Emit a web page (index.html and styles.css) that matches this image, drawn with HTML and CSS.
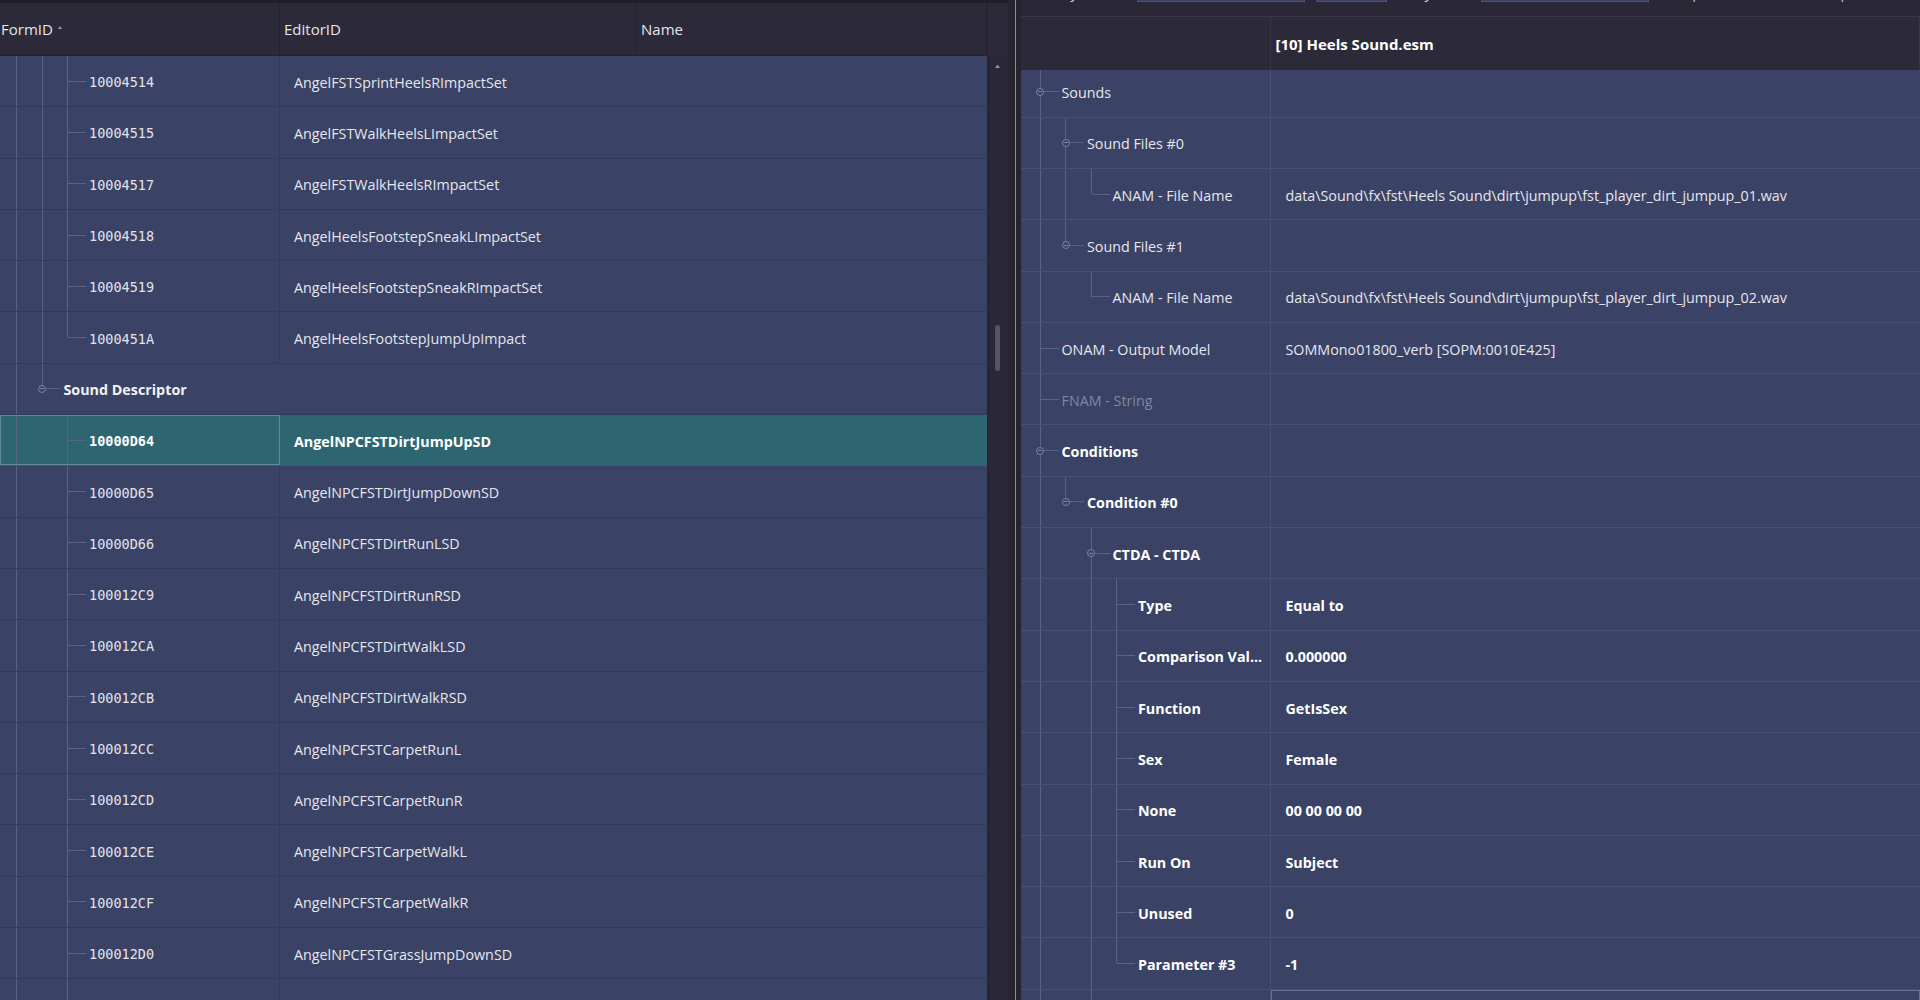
FILE: index.html
```html
<!DOCTYPE html>
<html lang="en">
<head>
    <meta charset="UTF-8">
    <meta name="viewport" content="width=device-width, initial-scale=1.0">
    <title>Record Browser</title>
    <link rel="stylesheet" href="styles.css">
</head>
<body>
    <div class="app">
        <!-- Record list (left) -->
        <section class="records">
            <div class="topstrip"></div>
            <div class="records-body">
                <div class="list">
                    <div class="list-head">
                        <div class="hc hc-first">FormID <span class="sort"></span></div>
                        <div class="hc">EditorID</div>
                        <div class="hc">Name</div>
                    </div>
                    <div class="rows">
                        <div class="row"><div class="c-id"><span class="g pipe"></span><span class="g pipe"></span><span class="g own tee"></span><span class="fid">10004514</span></div><div class="c-ed">AngelFSTSprintHeelsRImpactSet</div><div></div></div>
                        <div class="row"><div class="c-id"><span class="g pipe"></span><span class="g pipe"></span><span class="g own tee"></span><span class="fid">10004515</span></div><div class="c-ed">AngelFSTWalkHeelsLImpactSet</div><div></div></div>
                        <div class="row"><div class="c-id"><span class="g pipe"></span><span class="g pipe"></span><span class="g own tee"></span><span class="fid">10004517</span></div><div class="c-ed">AngelFSTWalkHeelsRImpactSet</div><div></div></div>
                        <div class="row"><div class="c-id"><span class="g pipe"></span><span class="g pipe"></span><span class="g own tee"></span><span class="fid">10004518</span></div><div class="c-ed">AngelHeelsFootstepSneakLImpactSet</div><div></div></div>
                        <div class="row"><div class="c-id"><span class="g pipe"></span><span class="g pipe"></span><span class="g own tee"></span><span class="fid">10004519</span></div><div class="c-ed">AngelHeelsFootstepSneakRImpactSet</div><div></div></div>
                        <div class="row"><div class="c-id"><span class="g pipe"></span><span class="g pipe"></span><span class="g own corner"></span><span class="fid">1000451A</span></div><div class="c-ed">AngelHeelsFootstepJumpUpImpact</div><div></div></div>
                        <div class="row group"><div class="c-id"><span class="g pipe"></span><span class="g own tog above"><span class="knob"></span></span><span class="grp">Sound Descriptor</span></div></div>
                        <div class="row selected"><div class="c-id"><span class="g pipe"></span><span class="g"></span><span class="g own tee"></span><span class="fid">10000D64</span></div><div class="c-ed">AngelNPCFSTDirtJumpUpSD</div><div></div></div>
                        <div class="row"><div class="c-id"><span class="g pipe"></span><span class="g"></span><span class="g own tee"></span><span class="fid">10000D65</span></div><div class="c-ed">AngelNPCFSTDirtJumpDownSD</div><div></div></div>
                        <div class="row"><div class="c-id"><span class="g pipe"></span><span class="g"></span><span class="g own tee"></span><span class="fid">10000D66</span></div><div class="c-ed">AngelNPCFSTDirtRunLSD</div><div></div></div>
                        <div class="row"><div class="c-id"><span class="g pipe"></span><span class="g"></span><span class="g own tee"></span><span class="fid">100012C9</span></div><div class="c-ed">AngelNPCFSTDirtRunRSD</div><div></div></div>
                        <div class="row"><div class="c-id"><span class="g pipe"></span><span class="g"></span><span class="g own tee"></span><span class="fid">100012CA</span></div><div class="c-ed">AngelNPCFSTDirtWalkLSD</div><div></div></div>
                        <div class="row"><div class="c-id"><span class="g pipe"></span><span class="g"></span><span class="g own tee"></span><span class="fid">100012CB</span></div><div class="c-ed">AngelNPCFSTDirtWalkRSD</div><div></div></div>
                        <div class="row"><div class="c-id"><span class="g pipe"></span><span class="g"></span><span class="g own tee"></span><span class="fid">100012CC</span></div><div class="c-ed">AngelNPCFSTCarpetRunL</div><div></div></div>
                        <div class="row"><div class="c-id"><span class="g pipe"></span><span class="g"></span><span class="g own tee"></span><span class="fid">100012CD</span></div><div class="c-ed">AngelNPCFSTCarpetRunR</div><div></div></div>
                        <div class="row"><div class="c-id"><span class="g pipe"></span><span class="g"></span><span class="g own tee"></span><span class="fid">100012CE</span></div><div class="c-ed">AngelNPCFSTCarpetWalkL</div><div></div></div>
                        <div class="row"><div class="c-id"><span class="g pipe"></span><span class="g"></span><span class="g own tee"></span><span class="fid">100012CF</span></div><div class="c-ed">AngelNPCFSTCarpetWalkR</div><div></div></div>
                        <div class="row"><div class="c-id"><span class="g pipe"></span><span class="g"></span><span class="g own tee"></span><span class="fid">100012D0</span></div><div class="c-ed">AngelNPCFSTGrassJumpDownSD</div><div></div></div>
                        <div class="row"><div class="c-id"><span class="g pipe"></span><span class="g"></span><span class="g own tee"></span><span class="fid">100012D1</span></div><div class="c-ed">AngelNPCFSTGrassJumpUpSD</div><div></div></div>
                    </div>
                </div>
                <div class="vscroll">
                    <div class="vs-head"></div>
                    <div class="vs-arrow"></div>
                    <div class="vs-thumb"></div>
                </div>
            </div>
        </section>

        <div class="splitter"></div>

        <!-- Record view (right) -->
        <section class="view">
            <div class="toolbar">
                <span class="tb-label">Filter by</span>
                <span class="tb-input wide"></span>
                <span class="tb-input short"></span>
                <span class="tb-label">Key by</span>
                <span class="tb-input wide"></span>
                <span class="tb-label tb-gap">|</span>
                <span class="tb-label tb-end">Sorting |</span>
            </div>
            <div class="rec">
                <div class="rec-head">
                    <div class="rh"></div>
                    <div class="rh rh-file">[10] Heels Sound.esm</div>
                </div>
                <div class="fields">
                    <div class="fld"><div class="f-name"><span class="g own tog above below"><span class="knob"></span></span><span>Sounds</span></div><div class="f-val"></div></div>
                    <div class="fld"><div class="f-name"><span class="g pipe"></span><span class="g own tog above below"><span class="knob"></span></span><span>Sound Files #0</span></div><div class="f-val"></div></div>
                    <div class="fld"><div class="f-name"><span class="g pipe"></span><span class="g pipe"></span><span class="g own corner"></span><span>ANAM - File Name</span></div><div class="f-val">data\Sound\fx\fst\Heels Sound\dirt\jumpup\fst_player_dirt_jumpup_01.wav</div></div>
                    <div class="fld"><div class="f-name"><span class="g pipe"></span><span class="g own tog above"><span class="knob"></span></span><span>Sound Files #1</span></div><div class="f-val"></div></div>
                    <div class="fld"><div class="f-name"><span class="g pipe"></span><span class="g"></span><span class="g own corner"></span><span>ANAM - File Name</span></div><div class="f-val">data\Sound\fx\fst\Heels Sound\dirt\jumpup\fst_player_dirt_jumpup_02.wav</div></div>
                    <div class="fld"><div class="f-name"><span class="g own tee"></span><span>ONAM - Output Model</span></div><div class="f-val">SOMMono01800_verb [SOPM:0010E425]</div></div>
                    <div class="fld"><div class="f-name"><span class="g own tee"></span><span class="muted">FNAM - String</span></div><div class="f-val"></div></div>
                    <div class="fld strong"><div class="f-name"><span class="g own tog above below"><span class="knob"></span></span><span>Conditions</span></div><div class="f-val"></div></div>
                    <div class="fld strong"><div class="f-name"><span class="g pipe"></span><span class="g own tog above"><span class="knob"></span></span><span>Condition #0</span></div><div class="f-val"></div></div>
                    <div class="fld strong"><div class="f-name"><span class="g pipe"></span><span class="g"></span><span class="g own tog above below"><span class="knob"></span></span><span>CTDA - CTDA</span></div><div class="f-val"></div></div>
                    <div class="fld strong"><div class="f-name"><span class="g pipe"></span><span class="g"></span><span class="g pipe"></span><span class="g own tee"></span><span>Type</span></div><div class="f-val">Equal to</div></div>
                    <div class="fld strong"><div class="f-name"><span class="g pipe"></span><span class="g"></span><span class="g pipe"></span><span class="g own tee"></span><span class="clip">Comparison Val...</span></div><div class="f-val">0.000000</div></div>
                    <div class="fld strong"><div class="f-name"><span class="g pipe"></span><span class="g"></span><span class="g pipe"></span><span class="g own tee"></span><span>Function</span></div><div class="f-val">GetIsSex</div></div>
                    <div class="fld strong"><div class="f-name"><span class="g pipe"></span><span class="g"></span><span class="g pipe"></span><span class="g own tee"></span><span>Sex</span></div><div class="f-val">Female</div></div>
                    <div class="fld strong"><div class="f-name"><span class="g pipe"></span><span class="g"></span><span class="g pipe"></span><span class="g own tee"></span><span>None</span></div><div class="f-val">00 00 00 00</div></div>
                    <div class="fld strong"><div class="f-name"><span class="g pipe"></span><span class="g"></span><span class="g pipe"></span><span class="g own tee"></span><span>Run On</span></div><div class="f-val">Subject</div></div>
                    <div class="fld strong"><div class="f-name"><span class="g pipe"></span><span class="g"></span><span class="g pipe"></span><span class="g own tee"></span><span>Unused</span></div><div class="f-val">0</div></div>
                    <div class="fld strong"><div class="f-name"><span class="g pipe"></span><span class="g"></span><span class="g pipe"></span><span class="g own corner"></span><span>Parameter #3</span></div><div class="f-val">-1</div></div>
                    <div class="fld strong"><div class="f-name"><span class="g pipe"></span><span class="g"></span><span class="g own tee"></span><span>CIS1 - Parameter #1</span></div><div class="f-val focus"></div></div>
                </div>
            </div>
        </section>
    </div>
</body>
</html>
```

FILE: styles.css
```css
:root {
    --row-h: 51.3px;
    --row-bg: #3a4265;
    --head-bg: #2c2a38;
    --chrome: #2a2836;
    --tree: #5b6283;
    --text: #e6e6ee;
}

* {
    box-sizing: border-box;
}

body {
    margin: 0;
    width: 1920px;
    height: 1000px;
    overflow: hidden;
    background: var(--chrome);
    color: var(--text);
    font-family: "Open Sans", "Noto Sans", sans-serif;
    font-size: 14.3px;
}

.app {
    display: flex;
    height: 1000px;
}

/* ---------- record list ---------- */

.records {
    width: 1008px;
    flex: none;
    display: flex;
    flex-direction: column;
}

.topstrip {
    height: 3px;
    background: #1f1e29;
}

.records-body {
    flex: 1;
    display: flex;
    min-height: 0;
}

.list {
    width: 987px;
    display: flex;
    flex-direction: column;
    overflow: hidden;
}

.list-head {
    height: 53px;
    flex: none;
    display: grid;
    grid-template-columns: 280px 357px 1fr;
    background: var(--head-bg);
    border-bottom: 1px solid #25232f;
}

.hc {
    display: flex;
    align-items: center;
    padding-left: 4px;
    border-right: 1px solid #25232f;
    font-size: 15px;
    color: #e4e4ea;
}

.hc-first {
    padding-left: 1px;
}

.sort {
    width: 0;
    height: 0;
    margin: -4px 0 0 5px;
    border-left: 2.5px solid transparent;
    border-right: 2.5px solid transparent;
    border-bottom: 3px solid #9a98a8;
}

.rows {
    flex: 1;
    background: var(--row-bg);
}

.row {
    display: grid;
    grid-template-columns: 280px 357px 1fr;
    height: var(--row-h);
    border-bottom: 1px solid #333a5b;
}

.row.group {
    grid-template-columns: 1fr;
}

.c-id {
    display: flex;
    align-items: stretch;
    padding-left: 3px;
    border-right: 1px solid #333a5b;
}

.row.group .c-id {
    border-right: none;
}

.c-ed {
    display: flex;
    align-items: center;
    padding: 2px 0 0 14px;
    white-space: nowrap;
}

.fid {
    align-self: center;
    padding-top: 2px;
    font-family: "DejaVu Sans Mono", "Liberation Mono", monospace;
    font-size: 13.5px;
    color: #e2e2ea;
}

.grp {
    align-self: center;
    padding-top: 2px;
    font-weight: 700;
    color: #f2f2f6;
}

.row.selected {
    background: #2d6671;
    border-bottom-color: #2d6671;
}

.row.selected .c-id {
    outline: 1px solid #5d8a93;
    outline-offset: -1px;
    border-right-color: #5d8a93;
}

.row.selected .fid,
.row.selected .c-ed {
    font-weight: 700;
    color: #fff;
}

/* tree guides: one column per depth level */
.g {
    flex: none;
    width: 25.5px;
}

.g.pipe {
    background: linear-gradient(var(--tree), var(--tree)) 13px 0 / 1px 100% no-repeat;
}

.g.own {
    width: 35px;
    display: flex;
    align-items: center;
}

.g.tee {
    background:
        linear-gradient(var(--tree), var(--tree)) 13px 0 / 1px 100% no-repeat,
        linear-gradient(var(--tree), var(--tree)) 14px 50% / 18px 1px no-repeat;
}

.g.corner {
    background:
        linear-gradient(var(--tree), var(--tree)) 13px 0 / 1px 50% no-repeat,
        linear-gradient(var(--tree), var(--tree)) 14px 50% / 18px 1px no-repeat;
}

.g.tog {
    background: linear-gradient(var(--tree), var(--tree)) 17px 50% / 15px 1px no-repeat;
}

.g.tog.above {
    background:
        linear-gradient(var(--tree), var(--tree)) 13px 0 / 1px calc(50% - 4px) no-repeat,
        linear-gradient(var(--tree), var(--tree)) 17px 50% / 15px 1px no-repeat;
}

.g.tog.above.below {
    background:
        linear-gradient(var(--tree), var(--tree)) 13px 0 / 1px calc(50% - 4px) no-repeat,
        linear-gradient(var(--tree), var(--tree)) 13px 100% / 1px calc(50% - 4px) no-repeat,
        linear-gradient(var(--tree), var(--tree)) 17px 50% / 15px 1px no-repeat;
}

.knob {
    width: 8px;
    height: 8px;
    margin-left: 9.5px;
    border: 1px solid #7c82a2;
    border-radius: 50%;
    background: linear-gradient(#7c82a2, #7c82a2) center / 4px 1px no-repeat;
}

.vscroll {
    width: 21px;
    display: flex;
    flex-direction: column;
    background: var(--chrome);
    border-left: 1px solid #25232f;
}

.vs-head {
    height: 53px;
    background: var(--head-bg);
}

/* small up chevron */
.vs-arrow {
    width: 5px;
    height: 3px;
    margin: 9px 0 10px 7px;
    border-left: 2.5px solid transparent;
    border-right: 2.5px solid transparent;
    border-bottom: 3px solid #8c8a9c;
}

.vs-thumb {
    width: 5px;
    height: 46px;
    margin: 247px 0 0 7px;
    border-radius: 3px;
    background: #56526b;
}

/* ---------- splitter ---------- */

.splitter {
    width: 13px;
    flex: none;
    background:
        linear-gradient(#8e8c9a, #8e8c9a) 7px 0 / 1px 100% no-repeat,
        #26242f;
}

/* ---------- record view ---------- */

.view {
    flex: 1;
    display: flex;
    flex-direction: column;
    min-width: 0;
}

.toolbar {
    height: 16px;
    flex: none;
    display: flex;
    align-items: flex-end;
    overflow: hidden;
    padding-left: 40px;
    background: var(--chrome);
}

.toolbar > span {
    margin-bottom: 14px;
}

.tb-label {
    font-size: 15px;
    line-height: 20px;
    color: #d8d8e0;
    margin-right: 20px;
}

.tb-input {
    height: 26px;
    background: var(--row-bg);
    border: 1px solid #4b5583;
    margin-right: 11px;
}

.tb-input.wide {
    width: 169px;
}

.tb-input.short {
    width: 72px;
    margin-right: 28px;
}

.tb-gap {
    margin-left: 30px;
}

.tb-end {
    margin-left: 120px;
}

.rec {
    flex: 1;
    display: flex;
    flex-direction: column;
    background: var(--row-bg);
    overflow: hidden;
}

.rec-head {
    height: 54px;
    flex: none;
    display: grid;
    grid-template-columns: 249.5px 1fr;
    background: var(--head-bg);
    border-top: 1px solid #3a3848;
    position: relative;
    z-index: 1;
}

.rh {
    display: flex;
    align-items: center;
    border-right: 1px solid #383646;
}

.rh-file {
    padding-left: 5px;
    font-weight: 700;
    font-size: 15px;
    color: #fff;
}

/* the field tree is scrolled a few pixels under the header */
.fields {
    margin-top: -3.6px;
}

.fld {
    display: grid;
    grid-template-columns: 249.5px 1fr;
    height: var(--row-h);
    border-bottom: 1px solid #485076;
}

.f-name {
    display: flex;
    align-items: stretch;
    padding-left: 5.5px;
    border-right: 1px solid #485076;
    white-space: nowrap;
    overflow: hidden;
}

.f-name > span:last-child {
    align-self: center;
    padding-top: 2px;
}

.f-val {
    display: flex;
    align-items: center;
    padding: 2px 0 0 15px;
    white-space: nowrap;
}

.fld.strong .f-name,
.fld.strong .f-val {
    font-weight: 700;
    color: #fff;
}

.muted {
    color: #7f87a6;
}

.clip {
    overflow: hidden;
    text-overflow: ellipsis;
}

.f-val.focus {
    outline: 1px solid #6a7091;
    outline-offset: -1px;
}
```
